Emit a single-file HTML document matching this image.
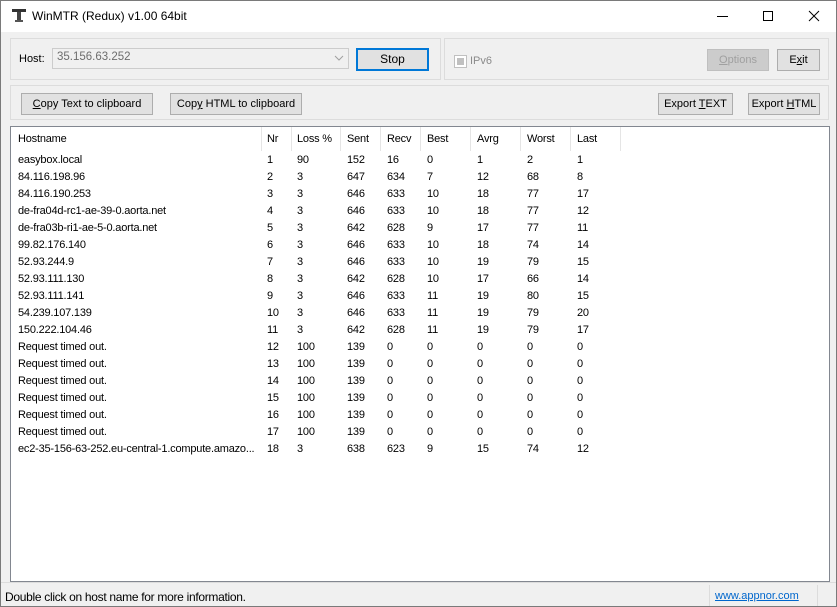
<!DOCTYPE html>
<html><head><meta charset="utf-8"><style>
*{margin:0;padding:0;box-sizing:border-box}
body{width:837px;height:607px;overflow:hidden;background:#f0f0f0;font-family:"Liberation Sans",sans-serif;font-size:11px;color:#000;position:relative}
.win{position:absolute;left:0;top:0;width:837px;height:607px;border:1px solid #7a7a7a}
.title{position:absolute;left:0;top:0;width:835px;height:31px;background:#fff}
.title .t{position:absolute;left:31px;top:8px;font-size:12px}
.abs{position:absolute}
.grp{position:absolute;border:1px solid #dcdcdc}
.btn{position:absolute;border:1px solid #adadad;background:#e1e1e1;text-align:center;line-height:20px;font-size:11px}
.list{position:absolute;left:9px;top:125px;width:820px;height:456px;border:1px solid #828790;background:#fff}
.sep{position:absolute;top:0;width:1px;height:24px;background:#e5e5e5}
.c{position:absolute;white-space:nowrap;letter-spacing:-0.2px}
</style></head><body>
<div class="win">
<div class="title">
<svg class="abs" style="left:10px;top:6px" width="16" height="16"><rect x="1" y="2" width="14" height="3" fill="#333"/><rect x="6" y="5" width="4" height="9" fill="#444"/><rect x="4" y="13" width="8" height="2" fill="#555"/></svg>
<div class="t">WinMTR (Redux) v1.00 64bit</div>
<div class="abs" style="left:716px;top:15px;width:11px;height:1px;background:#000"></div>
<div class="abs" style="left:762px;top:10px;width:10px;height:10px;border:1px solid #000"></div>
<svg class="abs" style="left:807px;top:9px" width="12" height="12"><path d="M1 1L11 11M11 1L1 11" stroke="#000" stroke-width="1"/></svg>
</div>
<div class="grp" style="left:9px;top:37px;width:431px;height:42px"></div>
<div class="grp" style="left:443px;top:37px;width:385px;height:42px"></div>
<div class="grp" style="left:9px;top:84px;width:819px;height:35px"></div>
<div class="abs" style="left:18px;top:52px">Host:</div>
<div class="abs" style="left:51px;top:47px;width:297px;height:21px;border:1px solid #ccc;background:#f0f0f0;color:#6d6d6d;padding:2px 0 0 4px;font-size:11.5px">35.156.63.252</div>
<svg class="abs" style="left:333px;top:54px" width="10" height="7"><path d="M1 1L5 5L9 1" stroke="#a0a0a0" fill="none"/></svg>
<div class="btn" style="left:355px;top:47px;width:73px;height:23px;border:2px solid #0078d7;line-height:19px;font-size:12px">Stop</div>
<div class="abs" style="left:453px;top:54px;width:13px;height:13px;border:1px solid #c0c0c0;background:#fff"><div style="margin:2px;width:7px;height:7px;background:#c0c0c0"></div></div>
<div class="abs" style="left:469px;top:54px;color:#8a8a8a">IPv6</div>
<div class="btn" style="left:706px;top:48px;width:62px;height:22px;color:#a0a0a0;background:#ccc;border-color:#bfbfbf"><u>O</u>ptions</div>
<div class="btn" style="left:776px;top:48px;width:43px;height:22px">E<u>x</u>it</div>
<div class="btn" style="left:20px;top:92px;width:132px;height:22px"><u>C</u>opy Text to clipboard</div>
<div class="btn" style="left:169px;top:92px;width:132px;height:22px">Cop<u>y</u> HTML to clipboard</div>
<div class="btn" style="left:657px;top:92px;width:75px;height:22px">Export <u>T</u>EXT</div>
<div class="btn" style="left:747px;top:92px;width:72px;height:22px">Export <u>H</u>TML</div>
<div class="list" id="L">
<div class="sep" style="left:250px"></div><div class="sep" style="left:280px"></div><div class="sep" style="left:329px"></div><div class="sep" style="left:369px"></div><div class="sep" style="left:409px"></div><div class="sep" style="left:459px"></div><div class="sep" style="left:509px"></div><div class="sep" style="left:559px"></div><div class="sep" style="left:609px"></div>
</div>
<div class="abs" style="left:0;top:581px;width:835px;height:1px;background:#dcdcdc"></div>
<div class="abs" style="left:4px;top:589px;font-size:12px;letter-spacing:-0.3px">Double click on host name for more information.</div>
<div class="abs" style="left:708px;top:584px;width:1px;height:21px;background:#dcdcdc"></div>
<div class="abs" style="left:714px;top:589px;color:#0066cc;text-decoration:underline">www.appnor.com</div>
<div class="abs" style="left:816px;top:584px;width:1px;height:21px;background:#dcdcdc"></div>
</div>
<script>
var rows=[["Hostname","Nr","Loss %","Sent","Recv","Best","Avrg","Worst","Last"],
["easybox.local",1,90,152,16,0,1,2,1],["84.116.198.96",2,3,647,634,7,12,68,8],["84.116.190.253",3,3,646,633,10,18,77,17],
["de-fra04d-rc1-ae-39-0.aorta.net",4,3,646,633,10,18,77,12],["de-fra03b-ri1-ae-5-0.aorta.net",5,3,642,628,9,17,77,11],
["99.82.176.140",6,3,646,633,10,18,74,14],["52.93.244.9",7,3,646,633,10,19,79,15],["52.93.111.130",8,3,642,628,10,17,66,14],
["52.93.111.141",9,3,646,633,11,19,80,15],["54.239.107.139",10,3,646,633,11,19,79,20],["150.222.104.46",11,3,642,628,11,19,79,17]];
for(var i=12;i<=17;i++)rows.push(["Request timed out.",i,100,139,0,0,0,0,0]);
rows.push(["ec2-35-156-63-252.eu-central-1.compute.amazo...",18,3,638,623,9,15,74,12]);
var xs=[7,256,286,336,376,416,466,516,566],h="";
rows.forEach(function(r,j){var y=j==0?6:27+(j-1)*17;r.forEach(function(v,k){h+='<div class="c" style="left:'+xs[k]+'px;top:'+y+'px">'+v+'</div>'})});
document.getElementById("L").insertAdjacentHTML("beforeend",h);
</script>
</body></html>
